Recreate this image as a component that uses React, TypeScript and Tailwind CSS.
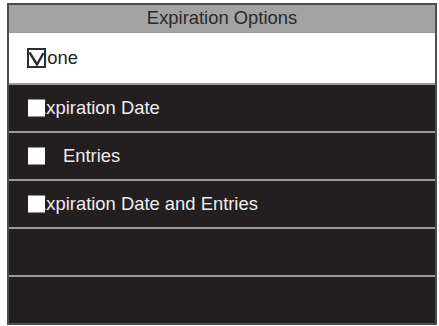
import React from "react";

type Option = {
  id: number;
  label: string;
  checked?: boolean;
  indent?: boolean; // label sits past the box instead of under it
};

const options: Option[] = [
  { id: 1, label: "None", checked: true },
  { id: 2, label: "Expiration Date" },
  { id: 3, label: "Entries", indent: true },
  { id: 4, label: "Expiration Date and Entries" },
];

function CheckBox({ checked }: { checked?: boolean }) {
  if (checked) {
    return (
      <span className="absolute left-[18px] top-1/2 -translate-y-1/2 flex h-[20px] w-[19px] items-center justify-center border-2 border-[#2e2e2e] bg-white">
        <svg viewBox="0 0 15 15" className="h-[15px] w-[15px]">
          <path d="M0.5 1.5 L8 13.5 L14.5 2" fill="none" stroke="#2e2e2e" strokeWidth="2.4" />
        </svg>
      </span>
    );
  }
  return <span className="absolute left-[19px] top-1/2 -translate-y-1/2 h-[17px] w-[17px] bg-white" />;
}

function Row({ opt }: { opt?: Option }) {
  const light = opt?.checked;
  return (
    <div
      className={`relative flex h-[46px] items-center ${
        light ? "h-[50px] bg-white text-[#222]" : "bg-[#231f20] text-[#ededed]"
      }`}
    >
      {opt && (
        <>
          <span className={`text-[18.4px] leading-none ${opt.indent ? "pl-[54px]" : "pl-[25px]"}`}>{opt.label}</span>
          <CheckBox checked={opt.checked} />
        </>
      )}
    </div>
  );
}

export default function App() {
  const rows: (Option | undefined)[] = [...options, undefined, undefined];

  return (
    <div className="h-[326px] w-[439px] bg-white pl-[7px] pt-[3px] font-['Liberation_Sans',Arial,sans-serif]">
      <div className="flex w-[430px] flex-col border-2 border-[#4d4d4d] bg-[#9a9a9a]">
        <div className="flex h-[27px] items-center justify-center bg-[#a3a3a3] text-[18.4px] leading-none text-[#2a2a2a]">
          Expiration Options
        </div>
        <div className="flex flex-col gap-[2px] pt-px">
          {rows.map((r, i) => (
            <Row key={i} opt={r} />
          ))}
        </div>
      </div>
    </div>
  );
}
